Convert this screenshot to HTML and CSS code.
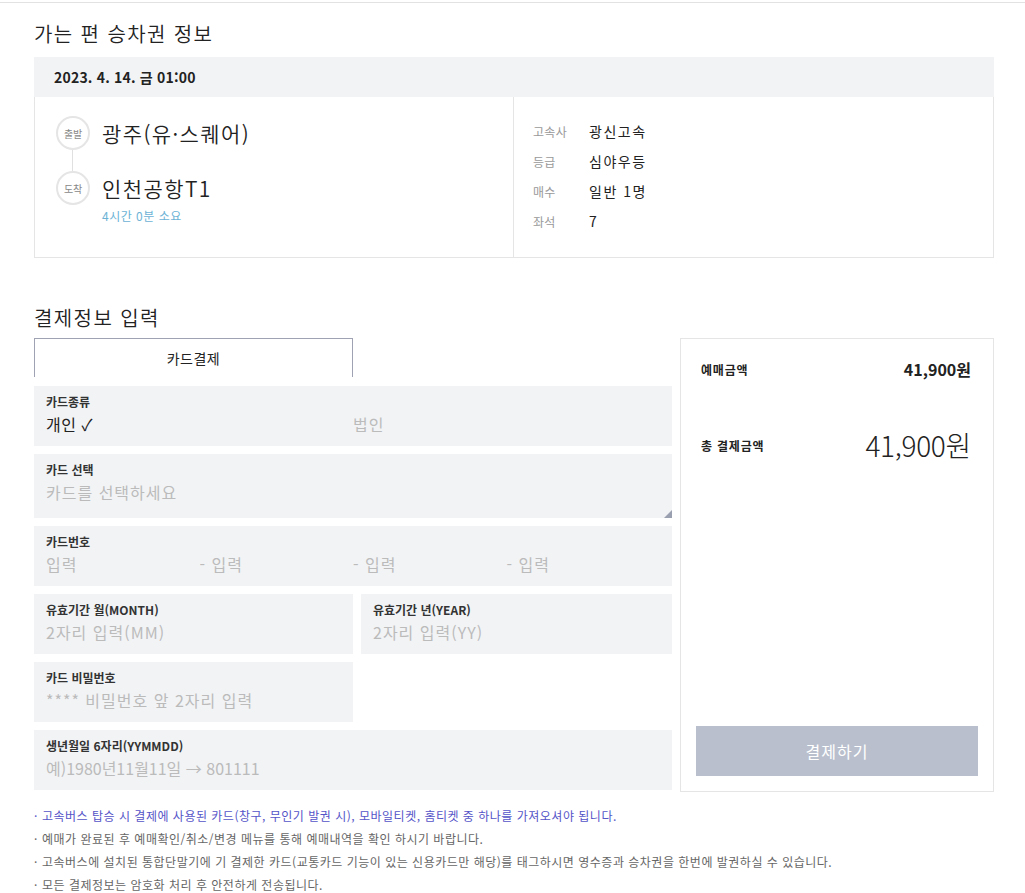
FILE: index.html
```html
<!DOCTYPE html>
<html lang="ko">
<head>
  <meta charset="UTF-8">
  <title>승차권 결제</title>
  <link rel="stylesheet" href="styles.css">
</head>
<body>
  <div class="page">
    <div class="wrap">

      <h2 class="sec-title first">가는 편 승차권 정보</h2>

      <div class="ticket">
        <div class="ticket-date">2023. 4. 14. 금 01:00</div>
        <div class="ticket-body">
          <div class="route">
            <div class="route-row">
              <span class="stop">출발</span>
              <span class="place">광주(유·스퀘어)</span>
            </div>
            <div class="route-line"></div>
            <div class="route-row">
              <span class="stop">도착</span>
              <span class="place">인천공항T1</span>
            </div>
            <div class="duration">4시간 0분 소요</div>
          </div>
          <div class="detail">
            <div class="detail-row"><span class="dt">고속사</span><span class="dd">광신고속</span></div>
            <div class="detail-row"><span class="dt">등급</span><span class="dd">심야우등</span></div>
            <div class="detail-row"><span class="dt">매수</span><span class="dd">일반 1명</span></div>
            <div class="detail-row"><span class="dt">좌석</span><span class="dd">7</span></div>
          </div>
        </div>
      </div>

      <h2 class="sec-title second">결제정보 입력</h2>

      <div class="pay">
        <div class="pay-form">
          <div class="tabs">
            <div class="tab active">카드결제</div>
          </div>

          <div class="field">
            <div class="label">카드종류</div>
            <div class="choice">
              <span class="opt on">개인 ✓</span>
              <span class="opt">법인</span>
            </div>
          </div>

          <div class="field tall">
            <div class="label">카드 선택</div>
            <div class="ph">카드를 선택하세요</div>
            <span class="corner"></span>
          </div>

          <div class="field">
            <div class="label">카드번호</div>
            <div class="cardno">
              <span class="ph">입력</span>
              <span class="ph">- 입력</span>
              <span class="ph">- 입력</span>
              <span class="ph">- 입력</span>
            </div>
          </div>

          <div class="field-row">
            <div class="field">
              <div class="label">유효기간 월(MONTH)</div>
              <div class="ph">2자리 입력(MM)</div>
            </div>
            <div class="field">
              <div class="label">유효기간 년(YEAR)</div>
              <div class="ph">2자리 입력(YY)</div>
            </div>
          </div>

          <div class="field-row">
            <div class="field">
              <div class="label">카드 비밀번호</div>
              <div class="ph">**** 비밀번호 앞 2자리 입력</div>
            </div>
            <div class="blank"></div>
          </div>

          <div class="field">
            <div class="label">생년월일 6자리(YYMMDD)</div>
            <div class="ph tight">예)1980년11월11일 → 801111</div>
          </div>
        </div>

        <div class="summary">
          <div class="sum-row">
            <span class="sum-label">예매금액</span>
            <span class="sum-price">41,900원</span>
          </div>
          <div class="sum-row total">
            <span class="sum-label">총 결제금액</span>
            <span class="sum-total">41,900원</span>
          </div>
          <button class="pay-btn">결제하기</button>
        </div>
      </div>

      <ul class="notes">
        <li class="hl">고속버스 탑승 시 결제에 사용된 카드(창구, 무인기 발권 시), 모바일티켓, 홈티켓 중 하나를 가져오셔야 됩니다.</li>
        <li>예매가 완료된 후 예매확인/취소/변경 메뉴를 통해 예매내역을 확인 하시기 바랍니다.</li>
        <li>고속버스에 설치된 통합단말기에 기 결제한 카드(교통카드 기능이 있는 신용카드만 해당)를 태그하시면 영수증과 승차권을 한번에 발권하실 수 있습니다.</li>
        <li>모든 결제정보는 암호화 처리 후 안전하게 전송됩니다.</li>
      </ul>

    </div>
  </div>
</body>
</html>
```

FILE: styles.css
```css
body {
  margin: 0;
  padding-top: 2px;
  font-family: "Noto Sans CJK KR", "Noto Sans", sans-serif;
  color: #222;
  background: #fff;
}

.page {
  border-top: 1px solid #e2e2e2;
}

.wrap {
  width: 960px;
  margin-left: 34px;
}

.sec-title {
  font-size: 20px;
  font-weight: 350;
  line-height: 28px;
  letter-spacing: 1.4px;
  margin: 0;
  color: #222;
}

.sec-title.first {
  padding-top: 17px;
  margin-bottom: 9px;
}

.sec-title.second {
  margin-top: 46px;
  margin-bottom: 6px;
}

/* 승차권 정보 */
.ticket-date {
  height: 40px;
  line-height: 40px;
  padding-left: 20px;
  background: #f2f3f5;
  font-size: 14px;
  font-weight: bold;
  letter-spacing: 0.2px;
}

.ticket-body {
  display: flex;
  height: 160px;
  border: 1px solid #e5e5e5;
  border-top: none;
}

.route {
  width: 479px;
  border-right: 1px solid #e5e5e5;
  padding: 19px 0 0 21px;
  box-sizing: border-box;
}

.route-row {
  display: flex;
  align-items: center;
  gap: 12px;
  height: 34px;
}

.stop {
  width: 30px;
  height: 30px;
  border: 2px solid #e5e5e5;
  border-radius: 50%;
  font-size: 10px;
  color: #888;
  display: flex;
  align-items: center;
  justify-content: center;
  letter-spacing: -0.3px;
  flex: none;
}

.place {
  font-size: 21px;
  font-weight: 350;
  letter-spacing: 1.4px;
  color: #222;
}

.route-line {
  width: 1px;
  height: 21px;
  background: #e0e0e0;
  margin-left: 16px;
}

.duration {
  font-size: 12px;
  color: #6db3d6;
  margin: 2px 0 0 46px;
  letter-spacing: 0.5px;
}

.detail {
  padding: 19px 0 0 19px;
}

.detail-row {
  display: flex;
  height: 30px;
  align-items: center;
}

.dt {
  width: 56px;
  font-size: 12px;
  color: #999;
  letter-spacing: 0.3px;
}

.dd {
  font-size: 14px;
  color: #222;
  letter-spacing: 1.5px;
}

/* 결제정보 */
.pay {
  display: flex;
  gap: 8px;
  align-items: flex-start;
}

.pay-form {
  width: 638px;
  display: flex;
  flex-direction: column;
  gap: 8px;
}

.tabs {
  display: flex;
  height: 39px;
  margin-bottom: 1px;
}

.tab {
  width: 319px;
  box-sizing: border-box;
  border: 1px solid #9ea2b3;
  border-bottom: none;
  font-size: 14px;
  text-align: center;
  line-height: 38px;
  color: #222;
  letter-spacing: 0.5px;
}

.field {
  position: relative;
  background: #f2f3f5;
  height: 60px;
  box-sizing: border-box;
  padding: 7px 12px 0 12px;
}

.field.tall {
  height: 64px;
}

.field-row {
  display: flex;
  gap: 8px;
}

.field-row .field {
  width: 319px;
  flex: none;
}

.field-row .field + .field {
  width: auto;
  flex: 1;
}

.field-row .blank {
  flex: 1;
}

.label {
  font-size: 12px;
  font-weight: bold;
  color: #333;
  line-height: 18px;
  letter-spacing: 0;
}

.ph,
.opt {
  font-size: 16px;
  line-height: 26px;
  color: #bbb;
  letter-spacing: 1px;
}

.ph.tight {
  letter-spacing: 0;
}

.choice {
  display: flex;
}

.choice .opt {
  width: 307px;
}

.opt.on {
  color: #222;
  letter-spacing: 0.5px;
}

.cardno {
  display: flex;
}

.cardno .ph {
  width: 153.5px;
}

.corner {
  position: absolute;
  right: 0;
  bottom: 0;
  width: 0;
  height: 0;
  border-left: 8px solid transparent;
  border-bottom: 8px solid #9aa0b0;
}

/* 결제 요약 */
.summary {
  width: 314px;
  height: 454px;
  box-sizing: border-box;
  border: 1px solid #e5e5e5;
  padding: 18px 15px 15px 15px;
  display: flex;
  flex-direction: column;
}

.sum-row {
  display: flex;
  justify-content: space-between;
  align-items: center;
  padding: 0 7px 0 5px;
}

.sum-label {
  font-size: 12px;
  font-weight: bold;
  color: #222;
  letter-spacing: 0.8px;
}

.sum-price {
  font-size: 16px;
  font-weight: bold;
}

.sum-row.total {
  margin-top: 44px;
}

.sum-total {
  font-size: 28px;
  font-weight: 300;
  letter-spacing: -0.3px;
}

.pay-btn {
  margin-top: auto;
  height: 50px;
  border: none;
  background: #b9bfcd;
  color: #fff;
  font-family: inherit;
  font-size: 16px;
  letter-spacing: 1px;
  cursor: pointer;
}

/* 안내 */
.notes {
  list-style: none;
  margin: 12px 0 0 0;
  padding: 0;
}

.notes li {
  font-size: 12px;
  line-height: 23px;
  color: #666;
  letter-spacing: 0.5px;
  padding-left: 8px;
  position: relative;
}

.notes li::before {
  content: "·";
  position: absolute;
  left: 0;
}

.notes li.hl {
  color: #5555c8;
}
```
